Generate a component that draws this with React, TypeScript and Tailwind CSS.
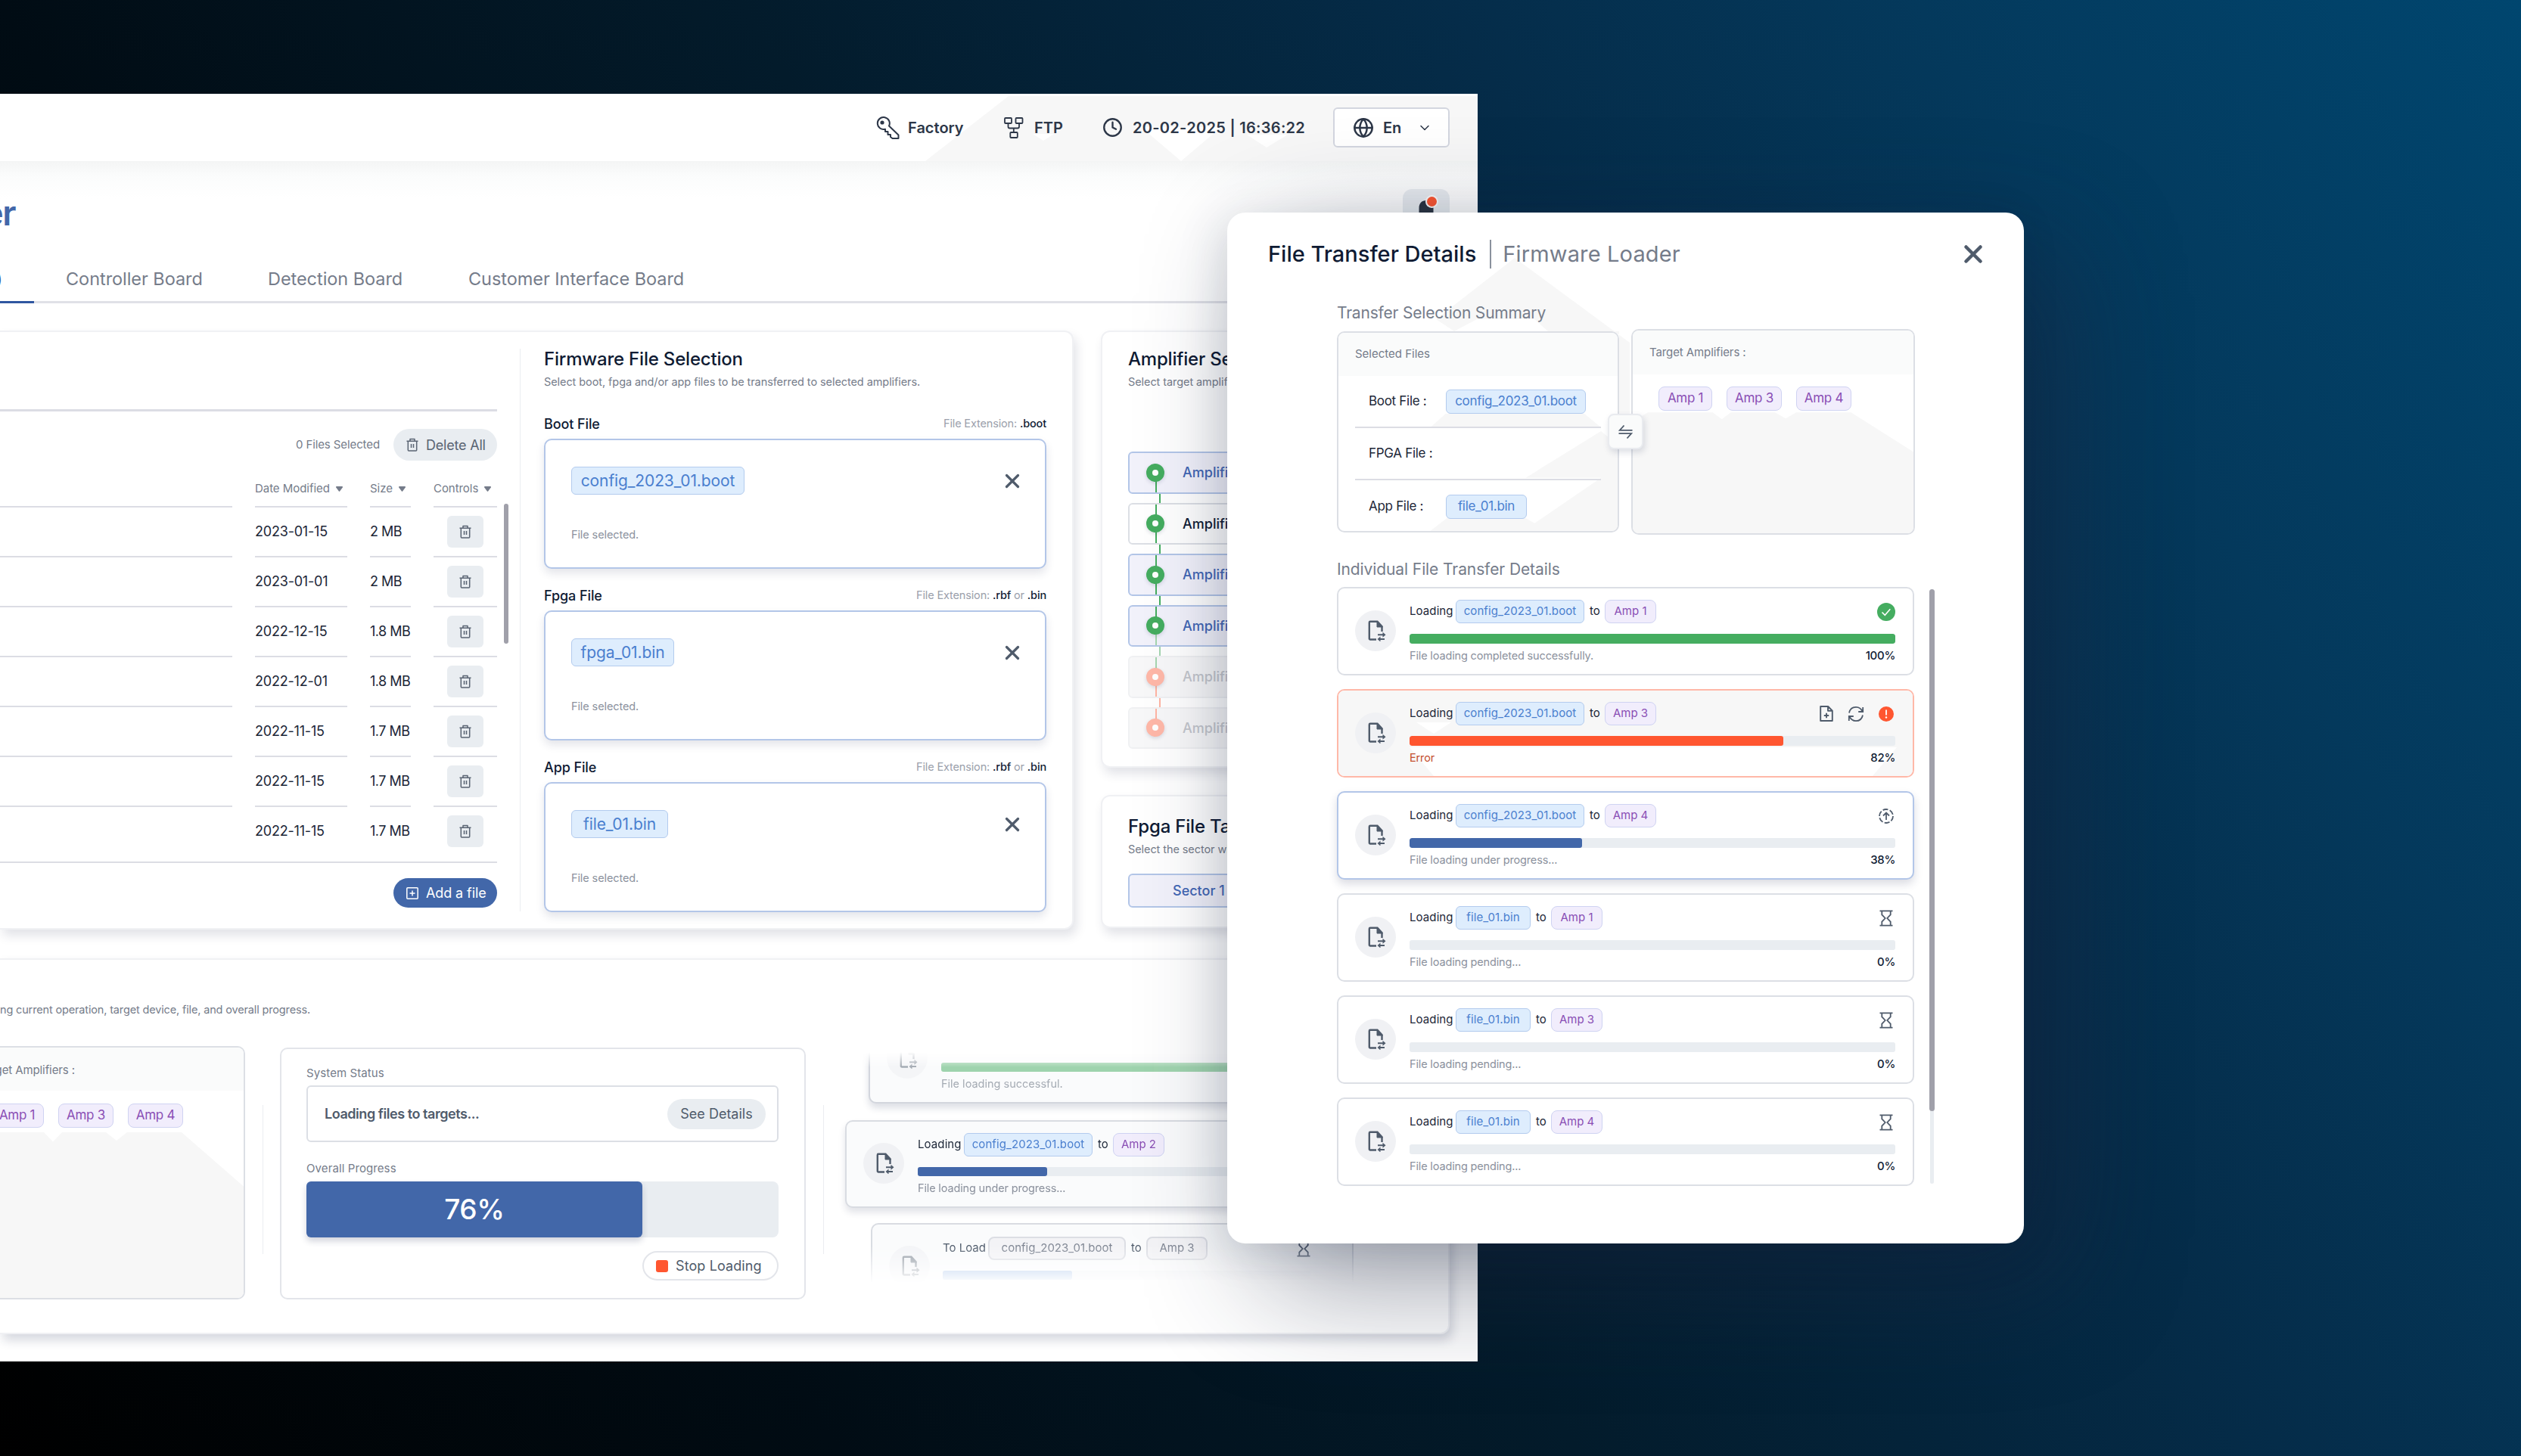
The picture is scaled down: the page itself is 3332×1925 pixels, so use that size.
import React from 'react';
import { clsx } from 'clsx';
import { ChevronDown, Clock, Globe, X } from 'lucide-react';

type Status = 'done' | 'error' | 'active' | 'pending';

interface Transfer {
  file: string;
  amp: string;
  percent: number;
  status: Status;
  note: string;
}

const files = [
  { date: '2023-01-15', size: '2 MB' },
  { date: '2023-01-01', size: '2 MB' },
  { date: '2022-12-15', size: '1.8 MB' },
  { date: '2022-12-01', size: '1.8 MB' },
  { date: '2022-11-15', size: '1.7 MB' },
  { date: '2022-11-15', size: '1.7 MB' },
  { date: '2022-11-15', size: '1.7 MB' },
];

const amplifiers = [
  { name: 'Amplifier 1', selected: true, online: true, top: '', bottom: 'bg-[#45ad60]', gap: 'bg-[#45ad60]' },
  { name: 'Amplifier 2', selected: false, online: true, top: 'bg-[#45ad60]', bottom: 'bg-[#45ad60]', gap: 'bg-[#45ad60]' },
  { name: 'Amplifier 3', selected: true, online: true, top: 'bg-[#45ad60]', bottom: 'bg-[#45ad60]', gap: 'bg-[#45ad60]' },
  { name: 'Amplifier 4', selected: true, online: true, top: 'bg-[#45ad60]', bottom: 'bg-[#a5d6b0]', gap: 'bg-[#a5d6b0]' },
  { name: 'Amplifier 5', selected: false, online: false, top: 'bg-[#a5d6b0]', bottom: 'bg-[#ffb5a3]', gap: 'bg-[#ffb5a3]' },
  { name: 'Amplifier 6', selected: false, online: false, top: 'bg-[#ffb5a3]', bottom: '', gap: '' },
];

const transfers: Transfer[] = [
  { file: 'config_2023_01.boot', amp: 'Amp 1', percent: 100, status: 'done', note: 'File loading completed successfully.' },
  { file: 'config_2023_01.boot', amp: 'Amp 3', percent: 82, status: 'error', note: 'Error' },
  { file: 'config_2023_01.boot', amp: 'Amp 4', percent: 38, status: 'active', note: 'File loading under progress...' },
  { file: 'file_01.bin', amp: 'Amp 1', percent: 0, status: 'pending', note: 'File loading pending...' },
  { file: 'file_01.bin', amp: 'Amp 3', percent: 0, status: 'pending', note: 'File loading pending...' },
  { file: 'file_01.bin', amp: 'Amp 4', percent: 0, status: 'pending', note: 'File loading pending...' },
];

/* ---------- icons ---------- */

const KeyIcon = () => (
  <svg className="h-[30px] w-[31px]" viewBox="0 0 31 30" fill="none" stroke="currentColor" strokeWidth="2" strokeLinejoin="round">
    <path d="M17 12.500a8 8 0 1 0-5 4.200V20h3.500v4h3.500v3l2.500 2h8v-4.500z" />
    <circle cx="8" cy="8" r="1.600" fill="currentColor" />
  </svg>
);

const NetworkIcon = () => (
  <svg className="h-[28px] w-[26px]" viewBox="0 0 26 28" fill="none" stroke="currentColor" strokeWidth="1.800" strokeLinejoin="round">
    <rect x="1" y="1" width="9" height="7" rx="1" />
    <rect x="15.500" y="1" width="9" height="7" rx="1" />
    <rect x="8.300" y="20" width="9.500" height="7" rx="1" />
    <path d="M5.500 8v4.500a2 2 0 0 0 2 2H18a2 2 0 0 0 2-2V8M12.800 14.500V20" />
  </svg>
);

const TrashIcon = ({ className }: { className?: string }) => (
  <svg className={className} viewBox="0 0 16 18" fill="none" stroke="currentColor" strokeWidth="1.500" strokeLinejoin="round">
    <path d="M.5 4.300h15M5 4V1.500h6V4M2.300 4.500V16a1 1 0 0 0 1 1h9.400a1 1 0 0 0 1-1V4.500M6.500 8v5M9.500 8v5" />
  </svg>
);

const SortIcon = () => (
  <svg className="h-[7px] w-[9px]" viewBox="0 0 9 7" fill="currentColor">
    <path d="M1 0h7a1 1 0 0 1 .8 1.500L5.300 6.200a1 1 0 0 1-1.600 0L.2 1.500A1 1 0 0 1 1 0z" />
  </svg>
);

const FileSwapIcon = () => (
  <svg className="ml-1 h-[28px] w-6" viewBox="0 0 24 28" fill="none" stroke="#4f5b6b" strokeWidth="2.400">
    <path d="M11 25.500H3a1.200 1.200 0 0 1-1.200-1.200V3A1.200 1.200 0 0 1 3 1.800h9.500l6 6.500V15" />
    <path d="M12 1.500V9h7.500z" fill="#4f5b6b" strokeWidth="1" />
    <path d="M13 19.300h7M22 25h-7" strokeWidth="2" />
    <path d="M19.500 15.800l4 3.500-4 3.500zM16.500 21.500l-4 3.500 4 3.500z" fill="#4f5b6b" stroke="none" />
  </svg>
);

const HourglassIcon = () => (
  <svg className="h-[22px] w-[18px]" viewBox="0 0 18 22" fill="none" stroke="#4f5b6b" strokeWidth="1.800">
    <path d="M.5 1.300h17M.5 20.700h17M3.300 1.500v4.800L7.700 11l-4.400 4.700v4.800M14.700 1.500v4.800L10.300 11l4.400 4.700v4.800" />
  </svg>
);

const DoneIcon = () => (
  <svg className="h-6 w-6" viewBox="0 0 24 24" fill="none">
    <circle cx="12" cy="12" r="12" fill="#45ad60" />
    <path d="M6.500 12.500l3.800 3.800 7-8" stroke="#fff" strokeWidth="1.600" />
  </svg>
);

const ErrorIcon = () => (
  <svg className="h-5 w-5" viewBox="0 0 20 20">
    <circle cx="10" cy="10" r="10" fill="#ff5630" />
    <path d="M10 4.500v7" stroke="#fff" strokeWidth="1.800" />
    <circle cx="10" cy="14.500" r="1.200" fill="#fff" />
  </svg>
);

const FilePlusIcon = () => (
  <svg className="h-[21px] w-[18px]" viewBox="0 0 18 21" fill="none" stroke="#4f5b6b" strokeWidth="1.900" strokeLinejoin="round">
    <path d="M1.200 1h10l5.600 5.600V20H1.200zM11 1v5.800h5.800M9 9.800v6.400M5.800 13h6.400" />
  </svg>
);

const RetryIcon = () => (
  <svg className="h-[22px] w-[22px]" viewBox="0 0 22 22" fill="none" stroke="#4f5b6b" strokeWidth="1.800">
    <path d="M2 9.500C3 4.500 6.500 1.800 11 1.800c4 0 7 2.200 8.600 6M20.200 2v6h-6M20 12.500c-1 5-4.500 7.700-9 7.700-4 0-7-2.200-8.600-6M1.800 20v-6h6" />
  </svg>
);

const UploadingIcon = () => (
  <svg className="h-5 w-5" viewBox="0 0 20 20" fill="none" stroke="#4f5b6b" strokeWidth="1.800">
    <circle cx="10" cy="10" r="9" strokeDasharray="7 2.400" />
    <path d="M10 15V6M6 9.500l4-4 4 4" />
  </svg>
);

const SwapIcon = () => (
  <svg className="h-5 w-[19px]" viewBox="0 0 19 20" fill="none" stroke="#4f5b6b" strokeWidth="1.800">
    <path d="M7.500 1.500L1.800 7.800H18.500M11.500 18.500l5.700-6.300H.5" />
  </svg>
);

/* ---------- shared pieces ---------- */

const FileChip = ({ name, className }: { name: string; className?: string }) => (
  <span
    className={clsx(
      'flex items-center justify-center rounded-md border border-[#b3cbee] bg-[#deedfd] whitespace-nowrap text-[#4a7fcf]',
      className,
    )}
  >
    {name}
  </span>
);

const AmpChip = ({ name, className }: { name: string; className?: string }) => (
  <span
    className={clsx(
      'flex items-center justify-center rounded-lg border border-[#cfd3f2] bg-[#f1edfc] whitespace-nowrap text-[#8a4fb5]',
      className,
    )}
  >
    {name}
  </span>
);

const barColor: Record<Status, string> = {
  done: 'bg-[#45ad60]',
  error: 'bg-[#ff5630]',
  active: 'bg-[#4267a9]',
  pending: 'bg-transparent',
};

const TransferCard = ({ item }: { item: Transfer }) => (
  <div
    className={clsx(
      'relative flex h-[117px] w-[763px] shrink-0 rounded-[10px] border-2 bg-white',
      item.status === 'active' && 'border-[#b3c6e8] shadow-[0_6px_12px_rgba(30,40,80,0.16)]',
      item.status === 'error' && 'border-[#ffb8a8]',
      (item.status === 'done' || item.status === 'pending') && 'border-[#dcdfe5]',
    )}
  >
    {item.status === 'error' && (
      <svg className="absolute inset-0 h-full w-full" viewBox="0 0 759 113" preserveAspectRatio="none">
        <path fill="#f7f7f7" d="M8 0h743a8 8 0 0 1 8 8v97a8 8 0 0 1-8 8H706l32-38H94l32 38H8a8 8 0 0 1-8-8V8a8 8 0 0 1 8-8z" />
        <path fill="#fff" d="M103 42h46l-23 15z" />
      </svg>
    )}
    <div className="relative mt-[29px] ml-[22px] flex h-[54px] w-[54px] items-center justify-center rounded-full bg-[#f0f1f4]">
      <FileSwapIcon />
    </div>
    <div className="relative ml-[18px] w-[642px] pt-[15px] text-[15px]">
      <div className="flex h-[31px] items-center">
        <span className="w-[61px] tracking-[0.1px] text-[#1c2637]">Loading</span>
        <FileChip
          name={item.file}
          className={clsx('h-full tracking-[0.1px]', item.file.startsWith('config') ? 'w-[170px]' : 'w-[99px]')}
        />
        <span className="w-[27px] pl-[7px] text-[#1c2637]">to</span>
        <AmpChip name={item.amp} className="h-full w-[68px]" />
        <div className="ml-auto flex items-center gap-[19px]">
          {item.status === 'done' && <DoneIcon />}
          {item.status === 'active' && <span className="pr-0.5"><UploadingIcon /></span>}
          {item.status === 'pending' && <span className="pr-[3px]"><HourglassIcon /></span>}
          {item.status === 'error' && (
            <>
              <FilePlusIcon />
              <RetryIcon />
              <span className="pr-0.5"><ErrorIcon /></span>
            </>
          )}
        </div>
      </div>
      <div className="mt-[14px] h-[13px] overflow-hidden rounded-[3px] bg-[#e9edf1]">
        <div
          className={clsx('h-full rounded-[3px]', barColor[item.status])}
          style={{ width: item.status === 'active' ? '35.5%' : item.status === 'error' ? '77%' : `${item.percent}%` }}
        />
      </div>
      <div className="mt-[6px] flex h-5 items-center justify-between">
        <span className={clsx('text-[14.5px] tracking-[-0.15px]', item.status === 'error' ? 'text-[#c4502f]' : 'text-[#8b919d]')}>
          {item.note}
        </span>
        <span className="font-medium tracking-[-0.3px] text-[#0f1b33]">{item.percent}%</span>
      </div>
    </div>
  </div>
);

/* ---------- window ---------- */

const TopBar = () => (
  <header className="relative flex h-[89px] items-center pl-[1158px] text-[20px] font-semibold text-[#2d3748]">
    <svg className="absolute inset-0 h-full w-full" viewBox="0 0 1953 89">
      <path fill="#f7f7f7" d="M1333 3h620v86H1223z" />
      <path fill="#fff" d="M1365 53h28l-14 9zM1508 44h106l-53 45zM1648 54h54l-28 17z" />
    </svg>
    <div className="relative flex w-[169px] items-center gap-[11px]">
      <KeyIcon />
      Factory
    </div>
    <div className="relative flex w-[130px] items-center gap-[14px]">
      <NetworkIcon />
      FTP
    </div>
    <div className="relative flex w-[305px] items-center gap-[13px] tracking-[0.3px] whitespace-nowrap">
      <Clock className="h-[27px] w-[27px]" strokeWidth={2.1} />
      20-02-2025 | 16:36:22
    </div>
    <div className="relative flex h-[53px] w-[154px] items-center rounded-md border-2 border-[#d3d6df] bg-white pl-6">
      <Globe className="h-7 w-7" strokeWidth={2.1} />
      <span className="ml-3">En</span>
      <ChevronDown className="ml-[21px] h-5 w-5" strokeWidth={1.8} />
    </div>
  </header>
);

const TitleRow = () => (
  <div className="mt-9 flex h-[63px] items-center justify-between pr-[37px]">
    <div className="flex w-[20px] justify-end">
      <h1 className="text-[46px] leading-none font-semibold tracking-[-1.5px] whitespace-nowrap text-[#4267a9]">Firmware Loader</h1>
    </div>
    <button className="relative flex h-[62px] w-[62px] items-center justify-center rounded-xl bg-[#e9edf1]">
      <svg className="h-8 w-8" viewBox="0 0 32 32" fill="#2b3340">
        <path d="M16 0c-6 0-9.500 4-9.500 10v8L3 24h26l-3.500-6v-8C25.500 4 22 0 16 0zM12 26a4 4 0 0 0 8 0z" />
      </svg>
      <span className="absolute top-[10px] right-[17px] h-[13px] w-[13px] rounded-full bg-[#ff5630] ring-2 ring-white" />
    </button>
  </div>
);

const Tabs = () => (
  <nav className="relative mt-[23px] mr-[37px] flex h-[66px] items-center border-b-[3px] border-[#e0e1e7] pt-[4px] text-[23.5px] tracking-[-0.05px] text-[#757c8a]">
    <div className="flex w-[45px]">
      <div className="flex w-[3px] justify-end">
        <span className="font-medium whitespace-nowrap text-[#2f56a0]">Amplifier Board (AMB)</span>
      </div>
      <span className="absolute -bottom-[3px] left-0 h-[3px] w-[45px] bg-[#2f56a0]" />
    </div>
    <span className="ml-[42px] w-[267px]">Controller Board</span>
    <span className="w-[265px]">Detection Board</span>
    <span>Customer Interface Board</span>
  </nav>
);

const HeaderCell = ({ label }: { label?: string }) => (
  <div className="mt-3 flex h-[50px] items-center gap-[8px] border-b-2 border-[#dcdde4] pt-[3px] text-[15px] tracking-[-0.05px] whitespace-nowrap text-[#757c8a]">
    {label && (
      <>
        {label}
        <SortIcon />
      </>
    )}
  </div>
);

const FileTable = () => (
  <section className="relative w-[657px]">
    <div className="h-[105px] border-b-[3px] border-[#dcdde4]" />
    <div className="mt-[23px] flex h-[42px] items-center justify-end">
      <span className="mr-[18px] text-[15px] tracking-[-0.1px] text-[#757c8a]">0 Files Selected</span>
      <button className="flex h-full w-[137px] items-center gap-[10px] rounded-full bg-[#e9edf1] pl-[17px] text-[18px] tracking-[-0.2px] whitespace-nowrap text-[#5a6473]">
        <TrashIcon className="h-[18px] w-4" />
        Delete All
      </button>
    </div>
    <div className="grid grid-cols-[307px_122px_54px_84px] gap-x-[30px]">
      <HeaderCell />
      <HeaderCell label="Date Modified" />
      <HeaderCell label="Size" />
      <HeaderCell label="Controls" />
    </div>
    {files.map((file, i) => (
      <div
        key={i}
        className={clsx(
          'grid h-[66px] grid-cols-[307px_122px_54px_84px] gap-x-[30px] text-[18px] whitespace-nowrap text-[#1c2637]',
          i < files.length - 1 ? '*:border-b-2 *:border-[#dcdde4]' : '*:border-b-2 *:border-transparent',
        )}
      >
        <div />
        <div className="flex items-center pb-[2px] tracking-[-0.2px]">{file.date}</div>
        <div className="flex items-center pb-[2px] tracking-[-0.5px]">{file.size}</div>
        <div className="flex items-center justify-center pb-px">
          <button className="flex h-[42px] w-12 items-center justify-center rounded-md bg-[#e9edf1] text-[#5a6473]">
            <TrashIcon className="h-[18px] w-[16px]" />
          </button>
        </div>
      </div>
    ))}
    <div className="h-[8px] border-b-2 border-[#dcdde4]" />
    <div className="mt-5 flex justify-end">
      <button className="flex h-[39px] w-[137px] items-center gap-[10px] rounded-full bg-[#4267a9] pl-[17px] text-[18px] tracking-[-0.1px] whitespace-nowrap text-white">
        <svg className="h-4 w-4" viewBox="0 0 16 16" fill="none" stroke="currentColor" strokeWidth="1.500">
          <rect x=".8" y=".8" width="14.400" height="14.400" rx="1" />
          <path d="M8 4.500v7M4.500 8h7" />
        </svg>
        Add a file
      </button>
    </div>
    <span className="absolute top-[227px] left-[666px] h-[185px] w-1.5 rounded-full bg-[#a0a0aa]" />
  </section>
);

const DropBox = ({ label, file, width, ext }: { label: string; file: string; width: string; ext: React.ReactNode }) => (
  <div>
    <div className="flex h-[30px] items-center justify-between">
      <span className="text-[18px] font-medium tracking-[-0.1px] text-[#0f1b33]">{label}</span>
      <span className="text-[14.5px] tracking-[-0.15px] text-[#9aa0ab]">File Extension: {ext}</span>
    </div>
    <div className="mt-[5px] flex h-[172px] justify-between rounded-[10px] border-2 border-[#b3c6e8] bg-white pt-[35px] pr-[28px] pl-[34px] shadow-[0_6px_12px_rgba(30,40,80,0.12)]">
      <div>
        <FileChip name={file} className={clsx('h-[37px] text-[21px] tracking-[-0.1px]', width)} />
        <p className="mt-[42px] text-[14.5px] tracking-[-0.1px] text-[#8b919d]">File selected.</p>
      </div>
      <X className="mt-[4px] h-[30px] w-[30px] text-[#4f5b6b]" strokeWidth={2.6} />
    </div>
  </div>
);

const Heading = ({ title, sub }: { title: string; sub: string }) => (
  <div className="whitespace-nowrap">
    <h2 className="h-8 text-[24px] leading-8 font-medium tracking-[-0.2px] text-[#0f1b33]">{title}</h2>
    <p className="mt-1 h-5 text-[14.5px] leading-5 tracking-[-0.08px] text-[#757c8a]">{sub}</p>
  </div>
);

const FirmwareSelection = () => (
  <section className="w-[664px] pt-[20px]">
    <Heading title="Firmware File Selection" sub="Select boot, fpga and/or app files to be transferred to selected amplifiers." />
    <div className="mt-[30px] flex flex-col gap-5">
      <DropBox label="Boot File" file="config_2023_01.boot" width="w-[229px]" ext={<b className="font-medium text-[#0f1b33]">.boot</b>} />
      <DropBox
        label="Fpga File"
        file="fpga_01.bin"
        width="w-[136px]"
        ext={<><b className="font-medium text-[#0f1b33]">.rbf</b> or <b className="font-medium text-[#0f1b33]">.bin</b></>}
      />
      <DropBox
        label="App File"
        file="file_01.bin"
        width="w-[128px]"
        ext={<><b className="font-medium text-[#0f1b33]">.rbf</b> or <b className="font-medium text-[#0f1b33]">.bin</b></>}
      />
    </div>
  </section>
);

const AmplifierSelection = () => (
  <section className="h-[578px] rounded-xl border-2 border-[#f0f1f4] bg-white pt-[20px] pr-[34px] pl-[34px] shadow-[4px_8px_14px_rgba(30,40,80,0.13)]">
    <Heading title="Amplifier Selection" sub="Select target amplifiers to load files." />
    <div className="mt-[82px] flex flex-col gap-[12px]">
      {amplifiers.map((amp) => (
        <div
          key={amp.name}
          className={clsx(
            'relative flex h-[55.5px] items-center rounded-md border-2 text-[18px] font-medium',
            amp.selected && 'border-[#b3c6e8] bg-[#f2f2fb] text-[#4267b5]',
            !amp.selected && amp.online && 'border-[#dcdfe5] bg-white text-[#0f1b33]',
            !amp.online && 'border-[#f0f1f3] bg-[#f8f8f9] text-[#c3c6cc]',
          )}
        >
          {amp.top && <span className={clsx('absolute top-0 left-[34px] h-1/2 w-[2px]', amp.top)} />}
          {amp.bottom && <span className={clsx('absolute bottom-0 left-[34px] h-1/2 w-[2px]', amp.bottom)} />}
          {amp.gap && <span className={clsx('absolute -bottom-[14px] left-[39px] h-3 w-[2px]', amp.gap)} />}
          <span
            className={clsx(
              'relative ml-[22px] h-6 w-6 rounded-full border-[8px] bg-white shadow-[0_2px_5px_rgba(30,40,80,0.15)]',
              amp.online ? 'border-[#45ad60]' : 'border-[#ffb8a8]',
            )}
          />
          <span className="ml-6">{amp.name}</span>
        </div>
      ))}
    </div>
  </section>
);

const SectorSelection = () => (
  <section className="-mt-px h-[176px] rounded-xl border-2 border-[#f0f1f4] bg-white px-[34px] pt-[24px] shadow-[4px_8px_14px_rgba(30,40,80,0.13)]">
    <Heading title="Fpga File Target Sector" sub="Select the sector where the file is written." />
    <div className="mt-[22px] flex h-[45px] w-[185px] items-center rounded-md border-2 border-[#b3c6e8] bg-[#f2f2fb] pl-[57px] text-[18px] font-medium text-[#4267b5]">
      Sector 1
    </div>
  </section>
);

const AmpPeaks = ({ className }: { className: string }) => (
  <svg className={className} viewBox="0 0 369 212" preserveAspectRatio="none">
    <path fill="#f7f7f7" d="M0 110V65L20 53h85l12 9 12-9h58l14 8 14-8h72l82 52v107H0z" />
  </svg>
);

const StatusPanel = () => (
  <div className="mt-[2px] h-[333px] w-[695px] rounded-[10px] border-2 border-[#e3e5ea] pt-[22px] pr-[34px] pl-[33px]">
    <p className="h-5 text-[15px] leading-5 tracking-[0.1px] text-[#757c8a]">System Status</p>
    <div className="mt-[6px] flex h-[75px] items-center justify-between rounded-md border-2 border-[#dcdfe5] pr-[15px] pl-[22px]">
      <span className="text-[18px] font-semibold tracking-[-0.45px] text-[#4f5b6b]">Loading files to targets...</span>
      <button className="h-10 w-[130px] rounded-full bg-[#e9edf1] text-[18px] text-[#4f5b6b]">See Details</button>
    </div>
    <p className="mt-[25px] h-5 text-[15px] leading-5 tracking-[0.1px] text-[#757c8a]">Overall Progress</p>
    <div className="mt-[7px] h-[74px] rounded-lg bg-[#e9edf1]">
      <div className="flex h-full w-[71.100%] items-center justify-center rounded-md bg-[#4267a9] text-[37px] font-medium tracking-[-0.5px] text-white shadow-[0_5px_8px_rgba(30,40,80,0.2)]">
        76%
      </div>
    </div>
    <div className="mt-[18px] flex justify-end">
      <button className="flex h-[39px] w-[180px] items-center rounded-full border-2 border-[#e3e5ea] pl-4 text-[18px] tracking-[0.1px] whitespace-nowrap text-[#4f5b6b]">
        <span className="mr-[10px] h-4 w-4 rounded-[3px] bg-[#ff5630]" />
        Stop Loading
      </button>
    </div>
  </div>
);

const QueueCircle = () => (
  <div className="mt-[28px] ml-[22px] flex h-[54px] w-[54px] shrink-0 items-center justify-center rounded-full bg-[#f0f1f4]">
    <FileSwapIcon />
  </div>
);

const Queue = () => (
  <div className="mt-[2px] ml-[28px] h-[310px] w-[710px] overflow-hidden [mask-image:linear-gradient(transparent_6px,black_26px,black_262px,transparent_312px)]">
    <div className="-mt-[43px] pl-[10px] text-[15px]">
      <div className="ml-[31px] flex h-[117px] w-[640px] rounded-[10px] border-2 border-[#d3d6dd] bg-[#fafbfc] shadow-[0_6px_10px_rgba(30,40,80,0.15)]">
        <div className="flex opacity-50">
          <QueueCircle />
          <div className="ml-[18px] pt-[61px]">
            <div className="h-3 w-[500px] rounded-[3px] bg-[#45ad60]" />
            <p className="mt-[5px] text-[14.5px] text-[#4f5b6b]">File loading successful.</p>
          </div>
        </div>
      </div>
      <div className="mt-[22px] flex h-[116px] w-[672px] rounded-[10px] border-2 border-[#d9dce2] bg-[#fafbfc] shadow-[0_6px_10px_rgba(30,40,80,0.13)]">
        <QueueCircle />
        <div className="ml-[18px] w-[500px] pt-[15px]">
          <div className="flex h-[31px] items-center">
            <span className="w-[61px] tracking-[0.1px] text-[#1c2637]">Loading</span>
            <FileChip name="config_2023_01.boot" className="h-full w-[170px] tracking-[0.1px]" />
            <span className="w-[27px] pl-[7px] text-[#1c2637]">to</span>
            <AmpChip name="Amp 2" className="h-full w-[68px]" />
          </div>
          <div className="mt-[14px] h-3 rounded-[3px] bg-[#e9edf1]">
            <div className="h-full w-[171px] rounded-[3px] bg-[#4267a9]" />
          </div>
          <p className="mt-[5px] text-[14.5px] tracking-[-0.15px] text-[#8b919d]">File loading under progress...</p>
        </div>
      </div>
      <div className="mt-5 ml-[34px] flex h-[117px] w-[638px] rounded-[10px] border-2 border-[#d9dce2] bg-[#fafbfc]">
        <div className="opacity-60">
          <QueueCircle />
        </div>
        <div className="ml-[17px] w-[486px] pt-[16px]">
          <div className="flex h-[31px] items-center">
            <span className="w-[60px] text-[#4f5b6b]">To Load</span>
            <span className="flex h-full w-[182px] items-center justify-center rounded-lg border-2 border-[#dcdee4] bg-[#f3f3f6] text-[#7f8693]">config_2023_01.boot</span>
            <span className="w-[27px] pl-[7px] text-[#4f5b6b]">to</span>
            <span className="flex h-full w-[81px] items-center justify-center rounded-lg border-2 border-[#dcdee4] bg-[#f3f3f6] text-[#7f8693]">Amp 3</span>
            <span className="ml-auto"><HourglassIcon /></span>
          </div>
          <div className="mt-[14px] h-3 rounded-[3px] bg-[#f1f3f6]">
            <div className="h-full w-[171px] rounded-[3px] bg-[#a9c3ea]" />
          </div>
        </div>
      </div>
    </div>
  </div>
);

const BottomCard = () => (
  <section className="mt-[38px] h-[497px] w-[1916px] rounded-r-xl border-2 border-l-0 border-[#f0f1f4] bg-white pt-[56px] shadow-[4px_8px_14px_rgba(30,40,80,0.18)]">
    <div className="flex w-[410px] justify-end">
      <p className="h-5 text-[14.5px] leading-5 tracking-[-0.15px] whitespace-nowrap text-[#757c8a]">
        Monitor the loading status including current operation, target device, file, and overall progress.
      </p>
    </div>
    <div className="mt-[38px] flex">
      <div className="relative h-[335px] w-[324px] overflow-hidden rounded-r-[10px] border-2 border-l-0 border-[#dcdfe5]">
        <AmpPeaks className="absolute bottom-0 -left-[47px] h-[292px] w-[369px]" />
        <div className="relative flex h-[57px] items-center bg-[#fafbfb] pt-[3px]">
          <div className="flex w-[99px] justify-end text-[15px] tracking-[-0.1px] whitespace-nowrap text-[#757c8a]">Target Amplifiers :</div>
        </div>
        <div className="relative mt-[17px] -ml-[13px] flex gap-[19px] text-[17px] tracking-[-0.3px]">
          <AmpChip name="Amp 1" className="h-8 w-[71px]" />
          <AmpChip name="Amp 3" className="h-8 w-[73px]" />
          <AmpChip name="Amp 4" className="h-8 w-[73px]" />
        </div>
      </div>
      <div className="mt-[78px] mr-[22px] ml-[23px] h-[197px] w-px bg-[#ebedf1]" />
      <StatusPanel />
      <div className="mt-[78px] -mr-[10px] ml-[23px] h-[197px] w-px bg-[#ebedf1]" />
      <Queue />
    </div>
  </section>
);

/* ---------- modal ---------- */

const SummaryRow = ({ label, file, width, last }: { label: string; file?: string; width?: string; last?: boolean }) => (
  <div className={clsx('mx-[22px] flex h-[69px] items-center pl-[18px] text-[17px] tracking-[-0.3px] text-[#1c2637]', !last && 'border-b-2 border-[#dcdde4]')}>
    <span className="w-[102px]">{label}</span>
    {file && <FileChip name={file} className={clsx('h-8 tracking-[-0.3px]', width)} />}
  </div>
);

const Modal = () => (
  <div className="absolute top-[281px] left-[1622px] h-[1363px] w-[1053px] rounded-3xl bg-white shadow-[-10px_10px_60px_rgba(20,30,60,0.12),50px_50px_160px_rgba(28,36,64,0.46)]">
    <svg className="absolute inset-0 h-full w-full" viewBox="0 0 1053 1363">
      <path fill="#f7f7f7" d="M380 60l152 112v120h-14V157H424l-18-16h-76l-30 16-24-16z" />
    </svg>
    <div className="relative flex h-[109px] items-center pl-[54px] text-[29px] whitespace-nowrap">
      <h2 className="font-medium text-[#0f1b33]">File Transfer Details</h2>
      <span className="mr-[15px] ml-[18px] h-[38px] w-[2px] bg-[#8a919d]" />
      <span className="tracking-[0.15px] text-[#757c8a]">Firmware Loader</span>
      <X className="mr-[48px] ml-auto h-[38px] w-[38px] text-[#4f5b6b]" strokeWidth={2.9} />
    </div>
    <div className="relative ml-[145px]">
      <h3 className="mt-[8px] h-8 text-[21px] leading-8 tracking-[-0.2px] text-[#757c8a]">Transfer Selection Summary</h3>
      <div className="relative mt-[5px] flex items-center gap-4">
        <div className="relative h-[266px] w-[373px] overflow-hidden rounded-[10px] border-2 border-[#dcdfe5] bg-white">
          <svg className="absolute inset-0 h-full w-full" viewBox="0 0 370 262">
            <path fill="#f7f7f7" d="M142 107h184l22 18H122zM348 130l22 18v114H122l26-20h94l18 10 88-60H248z" />
          </svg>
          <div className="relative flex h-[57px] items-center bg-[#fafbfb] pl-[22px] text-[15px] text-[#757c8a]">Selected Files</div>
          <div className="relative">
            <SummaryRow label="Boot File :" file="config_2023_01.boot" width="w-[185px]" />
            <SummaryRow label="FPGA File :" />
            <SummaryRow label="App File :" file="file_01.bin" width="w-[107px]" last />
          </div>
        </div>
        <div className="relative h-[272px] w-[375px] overflow-hidden rounded-[10px] border-2 border-[#dcdfe5] bg-white">
          <AmpPeaks className="absolute bottom-0 left-0 h-[213px] w-[371px]" />
          <div className="relative flex h-[58px] items-center bg-[#fafbfb] pl-[22px] text-[15px] tracking-[-0.1px] text-[#757c8a]">Target Amplifiers :</div>
          <div className="relative mt-[16px] ml-[34px] flex gap-[19px] text-[17px] tracking-[-0.3px]">
            <AmpChip name="Amp 1" className="h-8 w-[71px]" />
            <AmpChip name="Amp 3" className="h-8 w-[73px]" />
            <AmpChip name="Amp 4" className="h-8 w-[73px]" />
          </div>
        </div>
        <span className="absolute top-[112px] left-[358px] flex h-[47px] w-[47px] items-center justify-center rounded-lg border-2 border-[#e9ebef] bg-[#fafbfb] shadow-[2px_4px_8px_rgba(30,40,80,0.15)]">
          <SwapIcon />
        </span>
      </div>
      <h3 className="mt-[30px] h-8 text-[21px] leading-8 tracking-[-0.1px] text-[#757c8a]">Individual File Transfer Details</h3>
      <div className="mt-[7px] flex">
        <div className="flex flex-col gap-[18px]">
          {transfers.map((item, i) => (
            <TransferCard key={i} item={item} />
          ))}
        </div>
        <div className="mt-[3px] ml-[21px] flex h-[786px] w-[5px] justify-center rounded-full bg-[#e9edf1]">
          <div className="h-[690px] w-[7px] shrink-0 rounded-full bg-[#a0a0aa]" />
        </div>
      </div>
    </div>
  </div>
);

export default function App() {
  return (
    <div className="relative h-[1925px] w-[3332px] overflow-hidden bg-[linear-gradient(60deg,#000_0%,#010c14_25%,#031b2b_47%,#052c49_68%,#04395c_82%,#00466f_100%)] pt-[124px] font-['Inter',sans-serif]">
      <main className="h-[1676px] w-[1953px] overflow-hidden bg-white">
        <TopBar />
        <div className="h-[1587px] bg-[linear-gradient(#f4f5f5_0px,#fbfcfc_20px,#ffffff_50px)] pt-px">
          <div className="-mt-px">
            <TitleRow />
            <Tabs />
            <div className="mt-9 flex gap-9">
              <div className="flex h-[792px] w-[1419px] rounded-r-xl border-2 border-l-0 border-[#f0f1f4] bg-white shadow-[4px_8px_14px_rgba(30,40,80,0.13)]">
                <FileTable />
                <div className="mt-[22px] mr-[31px] ml-[30px] h-[744px] w-px bg-[#ebedf1]" />
                <FirmwareSelection />
              </div>
              <div className="flex w-[461px] flex-col gap-[37px]">
                <AmplifierSelection />
                <SectorSelection />
              </div>
            </div>
            <BottomCard />
          </div>
        </div>
      </main>
      <Modal />
    </div>
  );
}
